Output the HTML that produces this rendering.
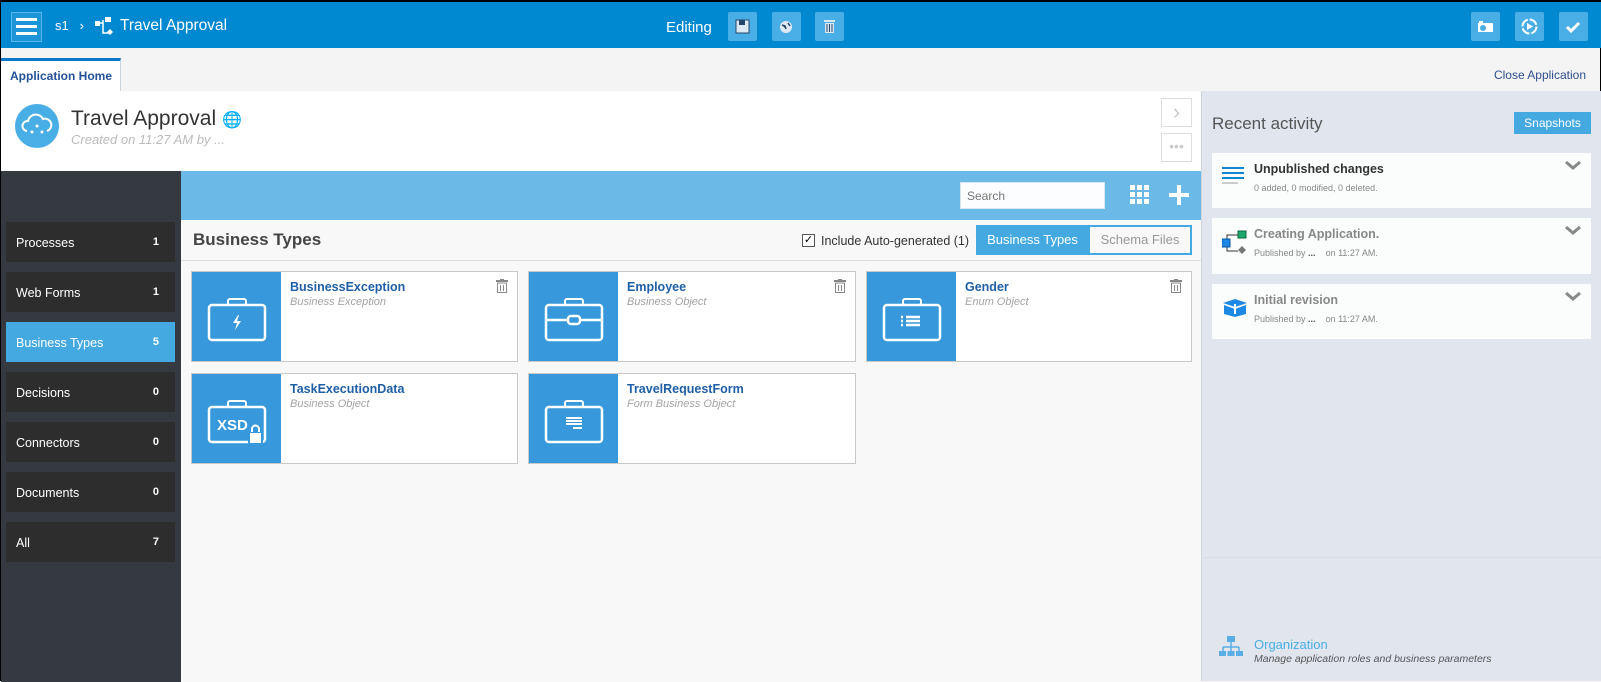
<!DOCTYPE html>
<html><head><meta charset="utf-8"><style>
*{box-sizing:border-box;margin:0;padding:0}
body{width:1601px;height:681px;overflow:hidden;font-family:"Liberation Sans",Arial,sans-serif;background:#f4f4f4;position:relative;border:1px solid #000}
.a{position:absolute}
.top{left:0;top:0;width:1601px;height:47px;background:#0088d1;border-top:1px solid #000}
.tb{width:29px;height:29px;background:#4aaee6;border-radius:2px;top:10px}
.card{background:#fff;border:1px solid #c8c8c8;height:91px}
.card .blue{position:absolute;left:0;top:0;bottom:0;width:89px;background:#3799db}
.card .t{position:absolute;left:98px;top:8px;color:#1f5fa6;font-weight:bold;font-size:12.5px}
.card .s{position:absolute;left:98px;top:24px;color:#a3a3a3;font-style:italic;font-size:11px}
.side{left:5px;width:169px;height:40px;background:#2d2d2d;color:#fff;font-size:12.5px;padding:14px 0 0 10px}
.side b{position:absolute;right:16px;top:14px;font-size:11px}
.act{left:1211px;width:379px;background:#fbfcfc}
.act .h{position:absolute;left:42px;top:9px;font-weight:bold;font-size:12.5px;color:#888}
.act .d{position:absolute;left:42px;top:30px;font-size:9px;color:#888}
.chev{position:absolute;right:10px;top:8px}
</style></head><body>
<div class="a top">
 <div class="a" style="left:10px;top:10px;width:31px;height:30px;border:1px solid #58b8ee;background:#1d96d9">
  <div class="a" style="left:4px;top:5px;width:21px;height:3px;background:#fff"></div>
  <div class="a" style="left:4px;top:12px;width:21px;height:3px;background:#fff"></div>
  <div class="a" style="left:4px;top:19px;width:21px;height:3px;background:#fff"></div>
 </div>
 <div class="a" style="left:54px;top:16px;color:#fff;font-size:13px">s1&nbsp;&nbsp;&nbsp;›</div>
 <svg class="a" style="left:94px;top:13px" width="20" height="22"><rect x="0" y="6" width="5" height="5" fill="#fff"/><rect x="10" y="2" width="6" height="5" fill="#fff"/><path d="M5 8h3v10h6M8 5v3" stroke="#fff" fill="none" stroke-width="1.5"/><path d="M15 14l3 3-3 3-3-3z" fill="#fff"/></svg>
 <div class="a" style="left:119px;top:15px;color:#fff;font-size:15.5px">Travel Approval</div>
 <div class="a" style="left:665px;top:17px;color:#fff;font-size:15px">Editing</div>
 <div class="a tb" style="left:727px"><svg width="29" height="29"><rect x="8" y="8" width="13" height="13" fill="#dde8f5" stroke="#23466c"/><rect x="11" y="8" width="6" height="5" fill="#23466c"/></svg></div>
 <div class="a tb" style="left:771px"><svg width="29" height="29"><circle cx="14" cy="15" r="6" fill="#dde8f5"/><path d="M10 13l3 1 1 3M16 11l2 3" stroke="#23466c" stroke-width="1.5"/></svg></div>
 <div class="a tb" style="left:814px"><svg width="29" height="29"><rect x="9" y="8" width="11" height="2" fill="#dde8f5"/><rect x="10" y="11" width="9" height="10" fill="#dde8f5"/><path d="M12 12v8M14.5 12v8M17 12v8" stroke="#23466c"/></svg></div>
 <div class="a tb" style="left:1470px"><svg width="29" height="29"><rect x="7" y="11" width="15" height="9" fill="#fff"/><circle cx="12" cy="16" r="3" fill="#4aaee6"/><rect x="8" y="9" width="4" height="2" fill="#fff"/></svg></div>
 <div class="a tb" style="left:1514px"><svg width="29" height="29"><circle cx="14.5" cy="14.5" r="7" fill="none" stroke="#fff" stroke-width="2" stroke-dasharray="9 2"/><path d="M12 11l6 3.5-6 3.5z" fill="#fff"/></svg></div>
 <div class="a tb" style="left:1558px"><svg width="29" height="29"><path d="M8 15l4 4 8-8" stroke="#fff" stroke-width="3" fill="none"/></svg></div>
</div>
<div class="a" style="left:0;top:57px;width:120px;height:33px;background:#fff;border-top:3px solid #0a78c8;border-right:1px solid #c9d3dc;color:#23519a;font-weight:bold;font-size:12px;padding:8px 0 0 9px">Application Home</div>
<div class="a" style="right:14px;top:67px;color:#2d4e8e;font-size:12px">Close Application</div>
<!-- header -->
<div class="a" style="left:0;top:90px;width:1200px;height:80px;background:#fff"></div>
<div class="a" style="left:14px;top:103px;width:44px;height:44px;border-radius:50%;background:#4aaee6"><svg width="44" height="44"><path d="M12 27a5 5 0 0 1 1-10 8 8 0 0 1 15-2 6 6 0 0 1 4 12" stroke="#fff" stroke-width="2" fill="none"/><circle cx="22" cy="22" r="1.5" fill="#fff"/><circle cx="17" cy="28" r="1.5" fill="#fff"/><circle cx="27" cy="28" r="1.5" fill="#fff"/></svg></div>
<div class="a" style="left:70px;top:106px;font-size:21px;color:#333">Travel Approval <span style="color:#4aaee6;font-size:16px">🌐</span></div>
<div class="a" style="left:70px;top:131px;font-size:13px;color:#bbb;font-style:italic">Created on 11:27 AM by ...</div>
<div class="a" style="left:1160px;top:97px;width:31px;height:29px;border:1px solid #ddd;color:#ccc;font-size:22px;text-align:center;line-height:26px">›</div>
<div class="a" style="left:1160px;top:132px;width:31px;height:29px;border:1px solid #ddd;color:#ccc;font-size:14px;text-align:center;line-height:24px">•••</div>
<!-- sidebar -->
<div class="a" style="left:0;top:170px;width:180px;height:511px;background:#353a40"></div>
<div class="a side" style="top:221px">Processes<b>1</b></div>
<div class="a side" style="top:271px">Web Forms<b>1</b></div>
<div class="a side" style="top:321px;background:#45a9e1">Business Types<b>5</b></div>
<div class="a side" style="top:371px">Decisions<b>0</b></div>
<div class="a side" style="top:421px">Connectors<b>0</b></div>
<div class="a side" style="top:471px">Documents<b>0</b></div>
<div class="a side" style="top:521px">All<b>7</b></div>
<!-- main -->
<div class="a" style="left:180px;top:170px;width:1020px;height:511px;background:#f8f8f8"></div>
<div class="a" style="left:180px;top:170px;width:1020px;height:49px;background:#6bb9e6"></div>
<div class="a" style="left:959px;top:181px;width:145px;height:27px;background:#fcfdfe;border:1px solid #d8e6f0;color:#777;font-size:12px;padding:6px 6px">Search</div>
<svg class="a" style="left:1129px;top:184px" width="20" height="20"><g fill="#fff"><rect x="0" y="0" width="5" height="5"/><rect x="7" y="0" width="5" height="5"/><rect x="14" y="0" width="5" height="5"/><rect x="0" y="7" width="5" height="5"/><rect x="7" y="7" width="5" height="5"/><rect x="14" y="7" width="5" height="5"/><rect x="0" y="14" width="5" height="5"/><rect x="7" y="14" width="5" height="5"/><rect x="14" y="14" width="5" height="5"/></g></svg>
<svg class="a" style="left:1168px;top:184px" width="20" height="20"><path d="M10 0v20M0 10h20" stroke="#fff" stroke-width="4"/></svg>
<div class="a" style="left:192px;top:229px;font-size:17px;font-weight:bold;color:#444">Business Types</div>
<div class="a" style="left:180px;top:259px;width:1020px;height:1px;background:#ddd"></div>
<div class="a" style="left:801px;top:233px;width:13px;height:13px;border:1px solid #555;background:#fff;font-size:11px;line-height:11px;text-align:center">✓</div>
<div class="a" style="left:820px;top:233px;font-size:12.5px;color:#333">Include Auto-generated (1)</div>
<div class="a" style="left:975px;top:224px;width:216px;height:30px;background:#45a9e1;border:2px solid #45a9e1"></div>
<div class="a" style="left:975px;top:226px;width:113px;height:26px;color:#fff;font-size:13px;text-align:center;line-height:26px">Business Types</div>
<div class="a" style="left:1089px;top:226px;width:100px;height:26px;background:#f8f8f8;color:#999;font-size:13px;text-align:center;line-height:26px">Schema Files</div>

<div class="a card" style="left:190px;top:270px;width:327px"><div class="blue"><svg width="89" height="89"><rect x="17" y="33" width="56" height="35" rx="3" fill="none" stroke="#fff" stroke-width="2.5"/><rect x="36" y="27" width="18" height="6" rx="2" fill="none" stroke="#fff" stroke-width="2"/><path d="M46 43l-5 8h4l-2 7 6-9h-4l2-6z" fill="#fff"/></svg></div><div class="t">BusinessException</div><div class="s">Business Exception</div><svg class="a" style="right:9px;top:7px" width="12" height="14"><rect x="0" y="1" width="12" height="2" fill="#888"/><rect x="4" y="0" width="4" height="2" fill="#888"/><rect x="1.5" y="4" width="9" height="9.5" fill="none" stroke="#888"/><path d="M4.5 6v6M7.5 6v6" stroke="#888"/></svg></div>
<div class="a card" style="left:527px;top:270px;width:328px"><div class="blue"><svg width="89" height="89"><rect x="17" y="33" width="56" height="35" rx="3" fill="none" stroke="#fff" stroke-width="2.5"/><rect x="36" y="27" width="18" height="6" rx="2" fill="none" stroke="#fff" stroke-width="2"/><path d="M17 48h22M51 48h22" stroke="#fff" stroke-width="2.5"/><rect x="39" y="44" width="12" height="8" rx="3" fill="none" stroke="#fff" stroke-width="2.5"/></svg></div><div class="t">Employee</div><div class="s">Business Object</div><svg class="a" style="right:9px;top:7px" width="12" height="14"><rect x="0" y="1" width="12" height="2" fill="#888"/><rect x="4" y="0" width="4" height="2" fill="#888"/><rect x="1.5" y="4" width="9" height="9.5" fill="none" stroke="#888"/><path d="M4.5 6v6M7.5 6v6" stroke="#888"/></svg></div>
<div class="a card" style="left:865px;top:270px;width:326px"><div class="blue"><svg width="89" height="89"><rect x="17" y="33" width="56" height="35" rx="3" fill="none" stroke="#fff" stroke-width="2.5"/><rect x="36" y="27" width="18" height="6" rx="2" fill="none" stroke="#fff" stroke-width="2"/><path d="M39 45h14M39 49h14M39 53h14M34 45h2M34 49h2M34 53h2" stroke="#fff" stroke-width="2.5"/></svg></div><div class="t">Gender</div><div class="s">Enum Object</div><svg class="a" style="right:9px;top:7px" width="12" height="14"><rect x="0" y="1" width="12" height="2" fill="#888"/><rect x="4" y="0" width="4" height="2" fill="#888"/><rect x="1.5" y="4" width="9" height="9.5" fill="none" stroke="#888"/><path d="M4.5 6v6M7.5 6v6" stroke="#888"/></svg></div>
<div class="a card" style="left:190px;top:372px;width:327px"><div class="blue"><svg width="89" height="89"><rect x="17" y="33" width="56" height="35" rx="3" fill="none" stroke="#fff" stroke-width="2.5"/><rect x="36" y="27" width="18" height="6" rx="2" fill="none" stroke="#fff" stroke-width="2"/><text x="25" y="56" fill="#fff" font-size="15" font-weight="bold" font-family="Liberation Sans">XSD</text><rect x="57" y="58" width="13" height="12" rx="1" fill="#fff" stroke="#3799db" stroke-width="2"/><path d="M60 58v-3a3.5 3.5 0 0 1 7 0v3" stroke="#fff" stroke-width="2" fill="none"/></svg></div><div class="t">TaskExecutionData</div><div class="s">Business Object</div></div>
<div class="a card" style="left:527px;top:372px;width:328px"><div class="blue"><svg width="89" height="89"><rect x="17" y="33" width="56" height="35" rx="3" fill="none" stroke="#fff" stroke-width="2.5"/><rect x="36" y="27" width="18" height="6" rx="2" fill="none" stroke="#fff" stroke-width="2"/><path d="M37 44h16M37 47h16M37 50h16M44 54h9" stroke="#fff" stroke-width="2"/></svg></div><div class="t">TravelRequestForm</div><div class="s">Form Business Object</div></div>
<!-- right panel -->
<div class="a" style="left:1200px;top:90px;width:400px;height:590px;background:#e1e6ee;border-left:1px solid #d0d5dc"></div>
<div class="a" style="left:1211px;top:113px;font-size:17px;color:#555">Recent activity</div>
<div class="a" style="left:1513px;top:111px;width:77px;height:22px;background:#45a9e1;color:#fff;font-size:12px;text-align:center;line-height:22px">Snapshots</div>
<div class="a act" style="top:152px;height:55px"><svg class="a" style="left:10px;top:14px" width="24" height="20"><path d="M0 1h22M0 6h22M0 11h22M0 16h16" stroke="#0e86d4" stroke-width="2"/><path d="M0 16h16" stroke="#ccc" stroke-width="2"/></svg><div class="h" style="color:#333">Unpublished changes</div><div class="d">0 added, 0 modified, 0 deleted.</div><svg class="chev" width="16" height="10"><path d="M1 1l7 6 7-6" stroke="#888" stroke-width="3" fill="none"/></svg></div>
<div class="a act" style="top:217px;height:56px"><svg class="a" style="left:10px;top:12px" width="26" height="24"><path d="M5 13V5h11M5 13v8h11" stroke="#333" fill="none"/><rect x="0" y="9" width="8" height="8" fill="#1e88e5" stroke="#0a57a0"/><rect x="16" y="1" width="8" height="7" fill="#1ca66a" stroke="#0b6a3d"/><path d="M20 16l4 4-4 4-4-4z" fill="#777"/></svg><div class="h">Creating Application.</div><div class="d">Published by <b style="color:#555">...</b> &nbsp;&nbsp;&nbsp;on 11:27 AM.</div><svg class="chev" width="16" height="10"><path d="M1 1l7 6 7-6" stroke="#888" stroke-width="3" fill="none"/></svg></div>
<div class="a act" style="top:283px;height:55px"><svg class="a" style="left:10px;top:14px" width="26" height="20"><path d="M1 5l12-4 12 4-12 4z M2 7l11 4 11-4v9l-11 3-11-3z" fill="#1e88e5"/><path d="M13 6v10" stroke="#fff" stroke-width="2"/></svg><div class="h">Initial revision</div><div class="d">Published by <b style="color:#555">...</b> &nbsp;&nbsp;&nbsp;on 11:27 AM.</div><svg class="chev" width="16" height="10"><path d="M1 1l7 6 7-6" stroke="#888" stroke-width="3" fill="none"/></svg></div>
<div class="a" style="left:1200px;top:556px;width:400px;height:1px;background:#d8dde5"></div>
<svg class="a" style="left:1218px;top:635px" width="24" height="24"><rect x="8" y="0" width="8" height="6" fill="#5aaee6"/><path d="M12 6v5M4 11h16M4 11v4M12 11v4M20 11v4" stroke="#5aaee6" stroke-width="1.5" fill="none"/><rect x="0" y="15" width="7" height="5" fill="#5aaee6"/><rect x="8.5" y="15" width="7" height="5" fill="#5aaee6"/><rect x="17" y="15" width="7" height="5" fill="#5aaee6"/></svg>
<div class="a" style="left:1253px;top:636px;font-size:13px;color:#4aaee6">Organization</div>
<div class="a" style="left:1253px;top:652px;font-size:10.5px;color:#555;font-style:italic">Manage application roles and business parameters</div>
</body></html>
